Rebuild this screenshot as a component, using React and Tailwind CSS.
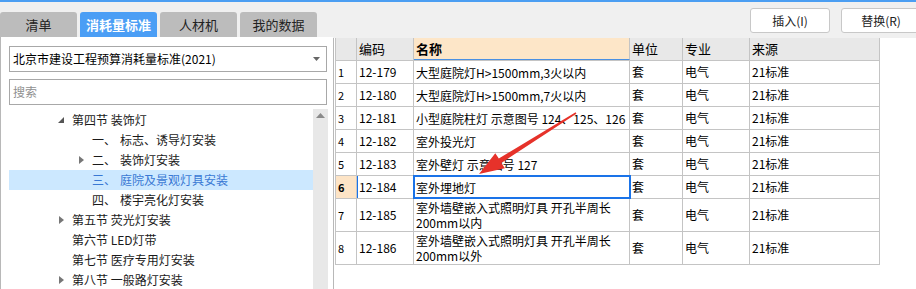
import { useState } from "react";

const tabs = ["清单", "消耗量标准", "人材机", "我的数据"];

const tree = [
  { level: 0, arrow: "down", label: "第四节 装饰灯" },
  { level: 1, num: "一、", label: "标志、诱导灯安装" },
  { level: 1, arrow: "right", num: "二、", label: "装饰灯安装" },
  { level: 1, num: "三、", label: "庭院及景观灯具安装", active: true },
  { level: 1, num: "四、", label: "楼宇亮化灯安装" },
  { level: 0, arrow: "right", label: "第五节 荧光灯安装" },
  { level: 0, label: "第六节 LED灯带" },
  { level: 0, label: "第七节 医疗专用灯安装" },
  { level: 0, arrow: "right", label: "第八节 一般路灯安装" },
];

const rows = [
  { no: 1, code: "12-179", name: ["大型庭院灯H>1500mm,3火以内"] },
  { no: 2, code: "12-180", name: ["大型庭院灯H>1500mm,7火以内"] },
  { no: 3, code: "12-181", name: ["小型庭院柱灯 示意图号 124、125、126"] },
  { no: 4, code: "12-182", name: ["室外投光灯"] },
  { no: 5, code: "12-183", name: ["室外壁灯 示意图号 127"] },
  { no: 6, code: "12-184", name: ["室外埋地灯"], selected: true },
  { no: 7, code: "12-185", name: ["室外墙壁嵌入式照明灯具 开孔半周长", "200mm以内"] },
  { no: 8, code: "12-186", name: ["室外墙壁嵌入式照明灯具 开孔半周长", "200mm以外"] },
];

const TreeRow = ({ item }) => (
  <div className={`flex items-center h-[20px] ${item.active ? "bg-[#cce8ff] text-[#3a78d4]" : "text-[#1a1a1a]"}`}>
    <div className={`${item.level === 0 ? "w-[63px]" : "w-[83px]"} flex justify-end pr-[8px]`}>
      {item.arrow === "down" && (
        <svg width="6" height="6" viewBox="0 0 6 6"><path d="M6 0 L6 6 L0 6 Z" fill="#555" /></svg>
      )}
      {item.arrow === "right" && (
        <svg width="5" height="8" viewBox="0 0 5 8"><path d="M0 0 L5 4 L0 8 Z" fill="#777" /></svg>
      )}
    </div>
    {item.num && <span className="w-[28px]">{item.num}</span>}
    <span>{item.label}</span>
  </div>
);

const Cell = ({ w, className = "", children }) => (
  <div className={`${w} shrink-0 border-r border-[#c4c4c4] flex items-center ${className}`}>{children}</div>
);

export default function App() {
  const [tab] = useState(1);

  return (
    <div className="relative w-[916px] h-[289px] overflow-hidden bg-white border-t-2 border-[#4b9ef2] text-[12px] text-black" style={{ fontFamily: '"Noto Sans CJK SC", "Noto Sans", sans-serif' }}>
      <div className="flex h-full">
        {/* left panel */}
        <div className="w-[333px] shrink-0 flex flex-col">
          <div className="h-[35px] bg-[#f0f0f0] flex items-end gap-[3px]">
            {tabs.map((t, i) => (
              <div
                key={t}
                className={`w-[77px] h-[25px] rounded-t-[3px] flex items-center justify-center text-[13px] ${i === tab ? "bg-[#4b9ef5] text-white font-bold" : "bg-[#bcbcbc] text-[#222]"}`}
              >
                {t}
              </div>
            ))}
          </div>
          <div className="flex-1 border-l border-[#b8b8b8] flex flex-col pl-[8px] pt-[9px] min-h-0">
            <div className="w-[318px] h-[26px] border border-[#a8a8a8] flex items-center justify-between pl-[3px] pr-[6px]">
              <span>北京市建设工程预算消耗量标准(2021)</span>
              <svg width="7" height="4" viewBox="0 0 7 4"><path d="M0 0 L7 0 L3.5 4 Z" fill="#666" /></svg>
            </div>
            <div className="w-[318px] h-[26px] mt-[7px] border border-[#a8a8a8] flex items-center pl-[3px] text-[#909090]">
              搜索
            </div>
            <div className="flex mt-[4px] flex-1 min-h-0">
              <div className="w-[304px] pt-[1px]">
                {tree.map((item) => (
                  <TreeRow key={item.label} item={item} />
                ))}
              </div>
              <div className="w-[15px] bg-[#e8e8e8] flex justify-center pt-[4px]">
                <svg width="9" height="5" viewBox="0 0 9 5"><path d="M0 5 L4.5 0 L9 5 Z" fill="#8a8a8a" /></svg>
              </div>
            </div>
          </div>
        </div>

        {/* right panel */}
        <div className="flex-1 flex flex-col">
          <div className="h-[36px] bg-[#f0f0f0] flex items-start justify-end gap-[11px] pt-[6px]">
            <button className="w-[80px] h-[25px] bg-white border border-[#c8c8c8] rounded-[3px] text-[12px] text-[#222]">插入(I)</button>
            <button className="w-[80px] h-[25px] bg-white border border-[#c8c8c8] rounded-[3px] text-[12px] text-[#222] -mr-[5px]">替换(R)</button>
          </div>
          <div className="flex-1 border-l border-[#b8b8b8] pl-[1px]">
            <div className="w-[545px] border-l border-[#c4c4c4]">
              <div className="flex h-[23px] border-b border-[#c4c4c4] bg-[#e8e8e8] text-[13px]">
                <Cell w="w-[21px]" />
                <Cell w="w-[57px]" className="pl-[2px]">编码</Cell>
                <Cell w="w-[216px]" className="pl-[2px] bg-[#fde6c8] font-bold border-b border-b-[#4a90e2]">名称</Cell>
                <Cell w="w-[53px]" className="pl-[2px]">单位</Cell>
                <Cell w="w-[67px]" className="pl-[2px]">专业</Cell>
                <Cell w="w-[130px]" className="pl-[2px]">来源</Cell>
              </div>
              {rows.map((r) => (
                <div key={r.no} className={`flex border-b border-[#c4c4c4] ${r.name.length > 1 ? "h-[33px]" : "h-[23px]"}`}>
                  <Cell w="w-[21px]" className={`pl-[2px] text-[11px] ${r.selected ? "bg-[#fde4c6] font-bold" : ""}`}>{r.no}</Cell>
                  <Cell w="w-[57px]" className={`pl-[2px] ${r.selected ? "shadow-[inset_1px_0_0_#1a73e8]" : ""}`}>{r.code}</Cell>
                  <Cell w="w-[216px]" className={`pl-[2px] ${r.selected ? "outline-2 outline-[#1a73e8] -outline-offset-1 relative" : ""}`}>
                    <div className="leading-[15px]">
                      {r.name.map((n) => (
                        <div key={n} className="whitespace-nowrap">{n}</div>
                      ))}
                    </div>
                  </Cell>
                  <Cell w="w-[53px]" className="pl-[2px]">套</Cell>
                  <Cell w="w-[67px]" className="pl-[2px]">电气</Cell>
                  <Cell w="w-[130px]" className="pl-[2px]">21标准</Cell>
                </div>
              ))}
            </div>
          </div>
        </div>
      </div>

      {/* annotation arrow */}
      <svg className="absolute left-0 top-0 pointer-events-none" width="916" height="287" viewBox="0 0 916 287">
        <polygon
          points="576.4,111.7 501.4,160.9 504.9,166.3 479,172 495.3,151.2 498.8,156.6 575.6,110.3"
          fill="#e6322a"
        />
      </svg>
    </div>
  );
}
